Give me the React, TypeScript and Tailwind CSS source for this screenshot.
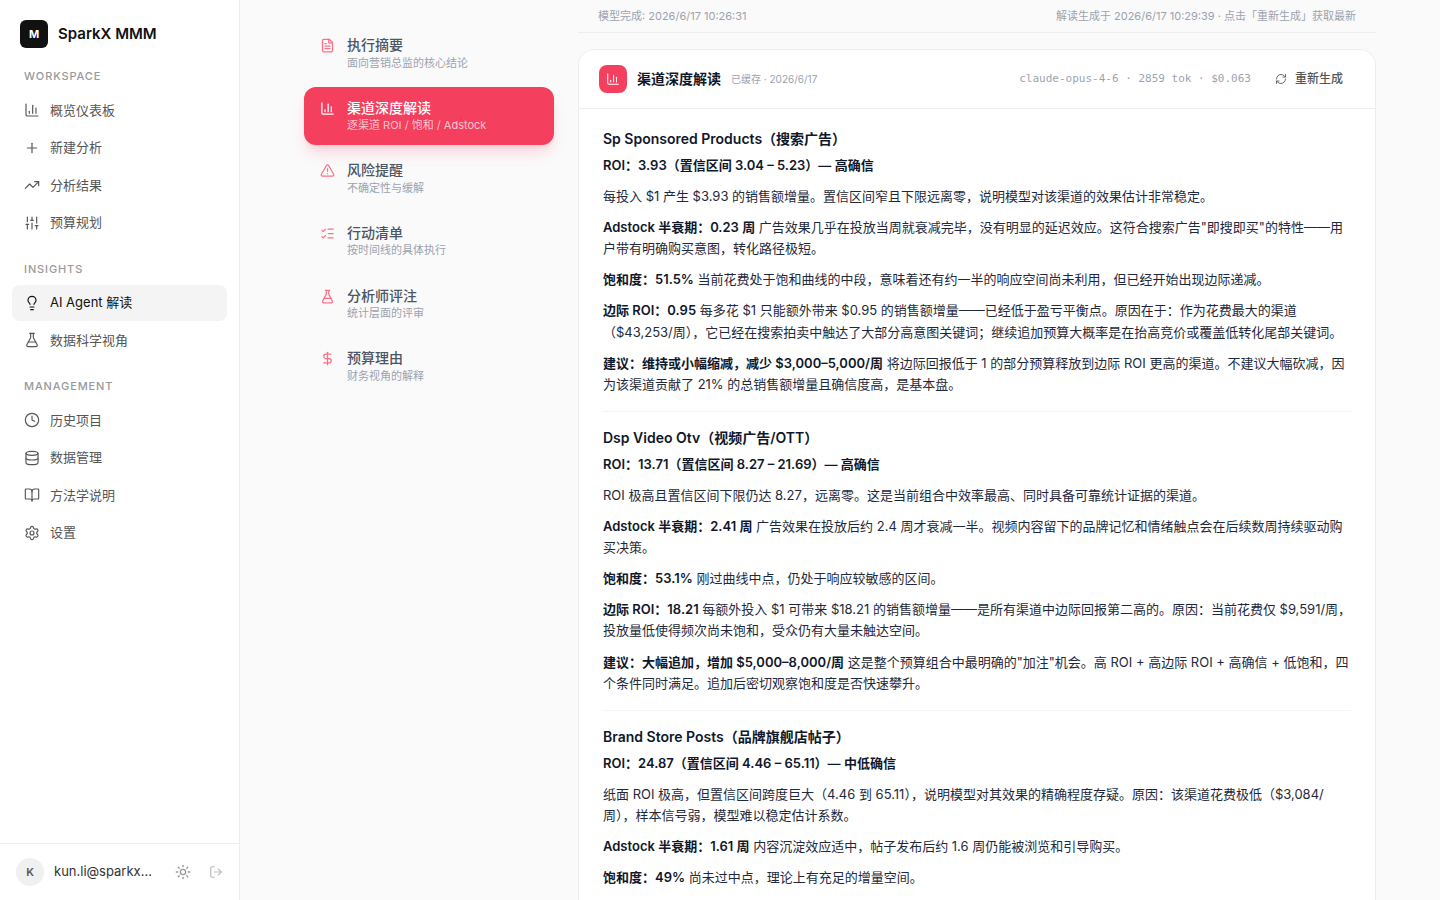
import type { ReactNode } from "react";
import {
  BookOpen,
  ChartColumn,
  Clock,
  Database,
  DollarSign,
  FileText,
  FlaskConical,
  Lightbulb,
  ListChecks,
  LogOut,
  Plus,
  RefreshCw,
  Settings,
  SlidersVertical,
  Sun,
  TrendingUp,
  TriangleAlert,
} from "lucide-react";

const navGroups = [
  {
    label: "WORKSPACE",
    items: [
      { title: "概览仪表板", icon: ChartColumn },
      { title: "新建分析", icon: Plus },
      { title: "分析结果", icon: TrendingUp },
      { title: "预算规划", icon: SlidersVertical },
    ],
  },
  {
    label: "INSIGHTS",
    items: [
      { title: "AI Agent 解读", icon: Lightbulb, active: true },
      { title: "数据科学视角", icon: FlaskConical },
    ],
  },
  {
    label: "MANAGEMENT",
    items: [
      { title: "历史项目", icon: Clock },
      { title: "数据管理", icon: Database },
      { title: "方法学说明", icon: BookOpen },
      { title: "设置", icon: Settings },
    ],
  },
];

const sections = [
  { title: "执行摘要", hint: "面向营销总监的核心结论", icon: FileText },
  { title: "渠道深度解读", hint: "逐渠道 ROI / 饱和 / Adstock", icon: ChartColumn, active: true },
  { title: "风险提醒", hint: "不确定性与缓解", icon: TriangleAlert },
  { title: "行动清单", hint: "按时间线的具体执行", icon: ListChecks },
  { title: "分析师评注", hint: "统计层面的评审", icon: FlaskConical },
  { title: "预算理由", hint: "财务视角的解释", icon: DollarSign },
];

const channels: { name: string; roi: string; body: { lead?: string; text: string }[] }[] = [
  {
    name: "Sp Sponsored Products（搜索广告）",
    roi: "ROI：3.93（置信区间 3.04 – 5.23）— 高确信",
    body: [
      { text: "每投入 $1 产生 $3.93 的销售额增量。置信区间窄且下限远离零，说明模型对该渠道的效果估计非常稳定。" },
      {
        lead: "Adstock 半衰期：0.23 周",
        text: "广告效果几乎在投放当周就衰减完毕，没有明显的延迟效应。这符合搜索广告\"即搜即买\"的特性——用户带有明确购买意图，转化路径极短。",
      },
      {
        lead: "饱和度：51.5%",
        text: "当前花费处于饱和曲线的中段，意味着还有约一半的响应空间尚未利用，但已经开始出现边际递减。",
      },
      {
        lead: "边际 ROI：0.95",
        text: "每多花 $1 只能额外带来 $0.95 的销售额增量——已经低于盈亏平衡点。原因在于：作为花费最大的渠道（$43,253/周），它已经在搜索拍卖中触达了大部分高意图关键词；继续追加预算大概率是在抬高竞价或覆盖低转化尾部关键词。",
      },
      {
        lead: "建议：维持或小幅缩减，减少 $3,000–5,000/周",
        text: "将边际回报低于 1 的部分预算释放到边际 ROI 更高的渠道。不建议大幅砍减，因为该渠道贡献了 21% 的总销售额增量且确信度高，是基本盘。",
      },
    ],
  },
  {
    name: "Dsp Video Otv（视频广告/OTT）",
    roi: "ROI：13.71（置信区间 8.27 – 21.69）— 高确信",
    body: [
      { text: "ROI 极高且置信区间下限仍达 8.27，远离零。这是当前组合中效率最高、同时具备可靠统计证据的渠道。" },
      {
        lead: "Adstock 半衰期：2.41 周",
        text: "广告效果在投放后约 2.4 周才衰减一半。视频内容留下的品牌记忆和情绪触点会在后续数周持续驱动购买决策。",
      },
      { lead: "饱和度：53.1%", text: "刚过曲线中点，仍处于响应较敏感的区间。" },
      {
        lead: "边际 ROI：18.21",
        text: "每额外投入 $1 可带来 $18.21 的销售额增量——是所有渠道中边际回报第二高的。原因：当前花费仅 $9,591/周，投放量低使得频次尚未饱和，受众仍有大量未触达空间。",
      },
      {
        lead: "建议：大幅追加，增加 $5,000–8,000/周",
        text: "这是整个预算组合中最明确的\"加注\"机会。高 ROI + 高边际 ROI + 高确信 + 低饱和，四个条件同时满足。追加后密切观察饱和度是否快速攀升。",
      },
    ],
  },
  {
    name: "Brand Store Posts（品牌旗舰店帖子）",
    roi: "ROI：24.87（置信区间 4.46 – 65.11）— 中低确信",
    body: [
      {
        text: "纸面 ROI 极高，但置信区间跨度巨大（4.46 到 65.11），说明模型对其效果的精确程度存疑。原因：该渠道花费极低（$3,084/周），样本信号弱，模型难以稳定估计系数。",
      },
      { lead: "Adstock 半衰期：1.61 周", text: "内容沉淀效应适中，帖子发布后约 1.6 周仍能被浏览和引导购买。" },
      { lead: "饱和度：49%", text: "尚未过中点，理论上有充足的增量空间。" },
    ],
  },
];

function Sidebar() {
  return (
    <aside className="flex w-60 shrink-0 flex-col border-r border-[#eee] bg-white">
      <div className="flex items-center gap-2.5 px-5 pt-5 pb-4">
        <div className="flex size-7 items-center justify-center rounded-md bg-[#111] text-[11px] font-bold text-white">
          M
        </div>
        <span className="text-[15px] font-semibold text-[#111]">SparkX MMM</span>
      </div>
      <nav className="flex flex-1 flex-col gap-4 px-3">
        {navGroups.map((group) => (
          <div key={group.label}>
            <p className="px-3 pt-1 pb-2 text-[11px] leading-normal font-medium tracking-[0.08em] text-[#999]">
              {group.label}
            </p>
            <ul className="flex flex-col gap-0.5">
              {group.items.map((item) => (
                <li key={item.title}>
                  <a
                    href="#"
                    className={`flex items-center gap-2.5 rounded-lg px-3 py-2 text-[13px] leading-normal ${
                      item.active ? "bg-[#f4f4f4] text-[#111]" : "text-[#555]"
                    }`}
                  >
                    <item.icon size={16} strokeWidth={1.75} />
                    {item.title}
                  </a>
                </li>
              ))}
            </ul>
          </div>
        ))}
      </nav>
      <div className="flex items-center border-t border-[#eee] px-4 py-3.5">
        <div className="flex size-7 shrink-0 items-center justify-center rounded-full bg-[#f0f0f0] text-[11px] font-semibold text-[#555]">
          K
        </div>
        <span className="ml-2.5 text-[13px] text-[#333]">kun.li@sparkx…</span>
        <div className="ml-auto flex items-center gap-[18px]">
          <button aria-label="切换主题" className="text-[#999]">
            <Sun size={16} strokeWidth={2} />
          </button>
          <button aria-label="退出登录" className="text-[#bbb]">
            <LogOut size={14} strokeWidth={2} />
          </button>
        </div>
      </div>
    </aside>
  );
}

function SectionNav() {
  return (
    <nav className="flex w-[250px] shrink-0 flex-col gap-1 pt-6">
      {sections.map((section) => (
        <button
          key={section.title}
          className={`flex items-start gap-3 rounded-xl px-4 py-3 text-left ${
            section.active ? "bg-[#f43f5e] shadow-lg shadow-[#f43f5e]/20" : ""
          }`}
        >
          <section.icon
            size={15}
            strokeWidth={2}
            className={`mt-0.5 shrink-0 ${section.active ? "text-white" : "text-[#fb7185]"}`}
          />
          <span className="block">
            <span
              className={`block text-sm leading-tight font-medium ${
                section.active ? "text-white" : "text-[#4b5563]"
              }`}
            >
              {section.title}
            </span>
            <span
              className={`mt-0.5 block text-[11px] leading-snug ${
                section.active ? "text-white/70" : "text-[#9ca3af]"
              }`}
            >
              {section.hint}
            </span>
          </span>
        </button>
      ))}
    </nav>
  );
}

function Strong({ children }: { children: ReactNode }) {
  return <strong className="font-semibold text-[#0f172a]">{children}</strong>;
}

function Report() {
  return (
    <article className="rounded-t-2xl border border-b-0 border-[#eee] bg-white">
      <header className="flex items-center border-b border-[#eee] px-5 py-[15px]">
        <div className="flex size-7 items-center justify-center rounded-lg bg-[#f43f5e] text-white">
          <ChartColumn size={14} strokeWidth={1.75} />
        </div>
        <h2 className="ml-2.5 text-sm font-semibold text-[#0f172a]">渠道深度解读</h2>
        <span className="ml-2.5 text-[10px] text-[#9ca3af]">已缓存 · 2026/6/17</span>
        <span className="ml-auto font-['DejaVu_Sans_Mono',monospace] text-[11px] text-[#9ca3af]">
          claude-opus-4-6 · 2859 tok · $0.063
        </span>
        <button className="ml-3 flex items-center gap-2 px-3 text-xs font-medium text-[#555]">
          <RefreshCw size={12} strokeWidth={1.75} />
          重新生成
        </button>
      </header>
      <div className="px-6 py-[19px] text-[13px] leading-relaxed text-[#1e293b]">
        {channels.map((channel, i) => (
          <section key={channel.name} className={i > 0 ? "mt-4 border-t border-[#f3f4f6] pt-[15px]" : ""}>
            <h3 className="mb-1 text-sm leading-relaxed font-semibold text-[#0f172a]">{channel.name}</h3>
            <p className="mb-2.5">
              <Strong>{channel.roi}</Strong>
            </p>
            {channel.body.map((p) => (
              <p key={p.text} className="-mr-1 mb-2.5 last:mb-0">
                {p.lead && <Strong>{p.lead}</Strong>} {p.text}
              </p>
            ))}
          </section>
        ))}
      </div>
    </article>
  );
}

export default function App() {
  return (
    <div className="flex h-screen overflow-hidden bg-[#fafafa] font-[Inter,'Noto_Sans_CJK_SC',sans-serif]">
      <Sidebar />
      <main className="flex min-w-0 flex-1 gap-6 overflow-hidden px-16">
        <SectionNav />
        <div className="min-w-0 flex-1">
          <div className="mb-4 flex items-center justify-between border-b border-[#eee] px-5 pt-2 pb-2 text-[11px] leading-4 text-[#9ca3af]">
            <span>模型完成: 2026/6/17 10:26:31</span>
            <span>解读生成于 2026/6/17 10:29:39 · 点击「重新生成」获取最新</span>
          </div>
          <Report />
        </div>
      </main>
    </div>
  );
}
